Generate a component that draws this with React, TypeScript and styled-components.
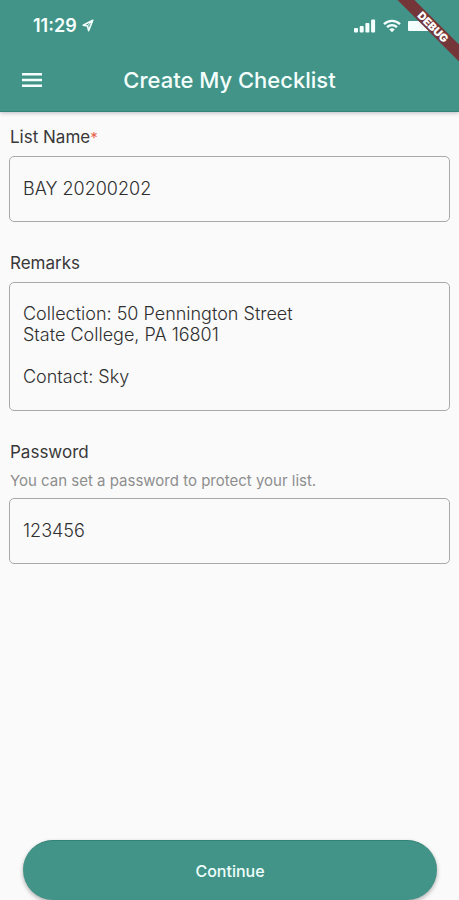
import React from "react";
import styled, { createGlobalStyle } from "styled-components";

const GlobalStyle = createGlobalStyle`
  *, *::before, *::after { box-sizing: border-box; }
  body { margin: 0; background: #fafafa; }
  body, input, textarea, button { font-family: Inter, "Liberation Sans", sans-serif; }
`;

const Screen = styled.div`
  position: relative;
  display: flex;
  flex-direction: column;
  min-height: 100vh;
  overflow: hidden;
  background: #fafafa;
  color: #383838;
`;

const Header = styled.header`
  padding-bottom: 2px;
  background: #429488;
  color: #f4fffd;
  border-bottom: 1px solid #358476;
  box-shadow: 0 1px 4px rgba(40, 40, 80, 0.3);
`;

const StatusBar = styled.div`
  display: flex;
  align-items: center;
  justify-content: space-between;
  height: 51px;
  padding: 0 27px 0 33px;
`;

const StatusGroup = styled.div<{ $gap: number }>`
  display: flex;
  align-items: center;
  gap: ${(p) => p.$gap}px;
`;

const Clock = styled.time`
  font-size: 18px;
  font-weight: 600;
  line-height: 24px;
`;

const TitleBar = styled.div`
  display: grid;
  grid-template-columns: 44px 1fr 44px;
  align-items: center;
  height: 58px;
  padding: 0 10px;
`;

const MenuButton = styled.button`
  display: flex;
  align-items: center;
  justify-content: center;
  height: 44px;
  padding: 0;
  border: 0;
  background: none;
  color: inherit;
  cursor: pointer;
`;

const Title = styled.h1`
  margin: 0;
  font-size: 22px;
  font-weight: 500;
  line-height: 28px;
  text-align: center;
  white-space: nowrap;
`;

const DebugRibbon = styled.div`
  position: absolute;
  top: 21px;
  right: -44px;
  width: 140px;
  background: #75363a;
  color: #fff;
  font-size: 11px;
  font-weight: 900;
  line-height: 12px;
  text-align: center;
  transform: rotate(45deg);
`;

const Form = styled.form`
  display: flex;
  flex: 1;
  flex-direction: column;
`;

const Fields = styled.div`
  display: flex;
  flex: 1;
  flex-direction: column;
  gap: 29px;
  padding: 13px 9px;
`;

const Field = styled.div`
  display: flex;
  flex-direction: column;
`;

const Label = styled.label`
  padding-left: 1px;
  margin-bottom: 7px;
  font-size: 17px;
  font-weight: 400;
  line-height: 24px;
`;

const Required = styled.span`
  color: #e8604c;
  font-size: 15px;
  line-height: 1;
`;

const Hint = styled.p`
  margin: 0 0 7px;
  padding-left: 1px;
  color: #8e8e8e;
  font-size: 15px;
  line-height: 20px;
`;

const TextBox = styled.input`
  width: 100%;
  height: 66px;
  padding: 0 13px 2px;
  border: 1px solid #a9a9a9;
  border-radius: 5px;
  background: transparent;
  color: #2f2f2f;
  font-size: 18px;
  font-weight: 300;
  line-height: 21px;
`;

const TextArea = styled.textarea`
  display: block;
  width: 100%;
  height: 129px;
  padding: 20px 13px;
  border: 1px solid #a9a9a9;
  border-radius: 5px;
  background: transparent;
  color: #2f2f2f;
  font-size: 18px;
  font-weight: 300;
  line-height: 21px;
  resize: none;
  overflow: hidden;
`;

const Footer = styled.footer`
  display: flex;
  padding: 0 22px 0 23px;
`;

const ContinueButton = styled.button`
  flex: 1;
  height: 60px;
  border: 0;
  border-top: 1px solid #2f8375;
  border-radius: 30px;
  background: #429488;
  box-shadow: 0 2px 4px rgba(0, 0, 0, 0.3);
  color: #eefffb;
  font-size: 16px;
  font-weight: 500;
  cursor: pointer;
`;

const LocationIcon = () => (
  <svg width="12" height="13" viewBox="0 0 12 13" aria-hidden="true">
    <path d="M10.8 1.2 1.2 6.2l4.3.8 1.1 4.6z" fill="none" stroke="currentColor" strokeWidth="1.6" strokeLinejoin="round" />
    <path d="M10.8 1.2 5.5 7" stroke="currentColor" strokeWidth="1" />
  </svg>
);

const MenuIcon = () => (
  <svg width="22" height="16" viewBox="0 0 22 16" aria-hidden="true">
    <path d="M1 2.2h20M1 8h20M1 13.8h20" stroke="currentColor" strokeWidth="2.4" />
  </svg>
);

const SignalIcon = () => (
  <svg width="22" height="14" viewBox="0 0 22 14" fill="currentColor" aria-hidden="true">
    <rect x="0" y="9" width="4" height="4.5" rx="1" />
    <rect x="5.7" y="7" width="4" height="6.5" rx="1" />
    <rect x="11.4" y="4" width="4" height="9.5" rx="1" />
    <rect x="17.1" y="0.5" width="4" height="13" rx="1" />
  </svg>
);

const WifiIcon = () => (
  <svg width="18" height="14" viewBox="0 0 18 14" fill="none" stroke="currentColor" aria-hidden="true">
    <path d="M1 5.2C5.6.7 12.4.7 17 5.2" strokeWidth="2.4" />
    <path d="M4 8.2c3-2.7 7-2.7 10 0" strokeWidth="2.3" />
    <path d="M6.3 10.4c1.7-1.4 3.7-1.4 5.4 0L9 13.2z" fill="currentColor" stroke="none" />
  </svg>
);

const BatteryIcon = () => (
  <svg width="24" height="12" viewBox="0 0 24 12" fill="currentColor" aria-hidden="true">
    <rect x="0" y="1" width="22" height="10" rx="1" />
  </svg>
);

export default function App() {
  return (
    <Screen>
      <GlobalStyle />
      <Header>
        <StatusBar>
          <StatusGroup $gap={5}>
            <Clock>11:29</Clock>
            <LocationIcon />
          </StatusGroup>
          <StatusGroup $gap={7}>
            <SignalIcon />
            <WifiIcon />
            <BatteryIcon />
          </StatusGroup>
        </StatusBar>
        <TitleBar>
          <MenuButton type="button" aria-label="Menu">
            <MenuIcon />
          </MenuButton>
          <Title>Create My Checklist</Title>
        </TitleBar>
      </Header>
      <Form onSubmit={(e) => e.preventDefault()}>
        <Fields>
          <Field>
            <Label htmlFor="list-name">
              List Name<Required>*</Required>
            </Label>
            <TextBox id="list-name" defaultValue="BAY 20200202" required />
          </Field>
          <Field>
            <Label htmlFor="remarks">Remarks</Label>
            <TextArea
              id="remarks"
              defaultValue={"Collection: 50 Pennington Street\nState College, PA 16801\n\nContact: Sky"}
            />
          </Field>
          <Field>
            <Label htmlFor="password">Password</Label>
            <Hint id="password-hint">You can set a password to protect your list.</Hint>
            <TextBox id="password" defaultValue="123456" aria-describedby="password-hint" />
          </Field>
        </Fields>
        <Footer>
          <ContinueButton type="submit">Continue</ContinueButton>
        </Footer>
      </Form>
      <DebugRibbon>DEBUG</DebugRibbon>
    </Screen>
  );
}
